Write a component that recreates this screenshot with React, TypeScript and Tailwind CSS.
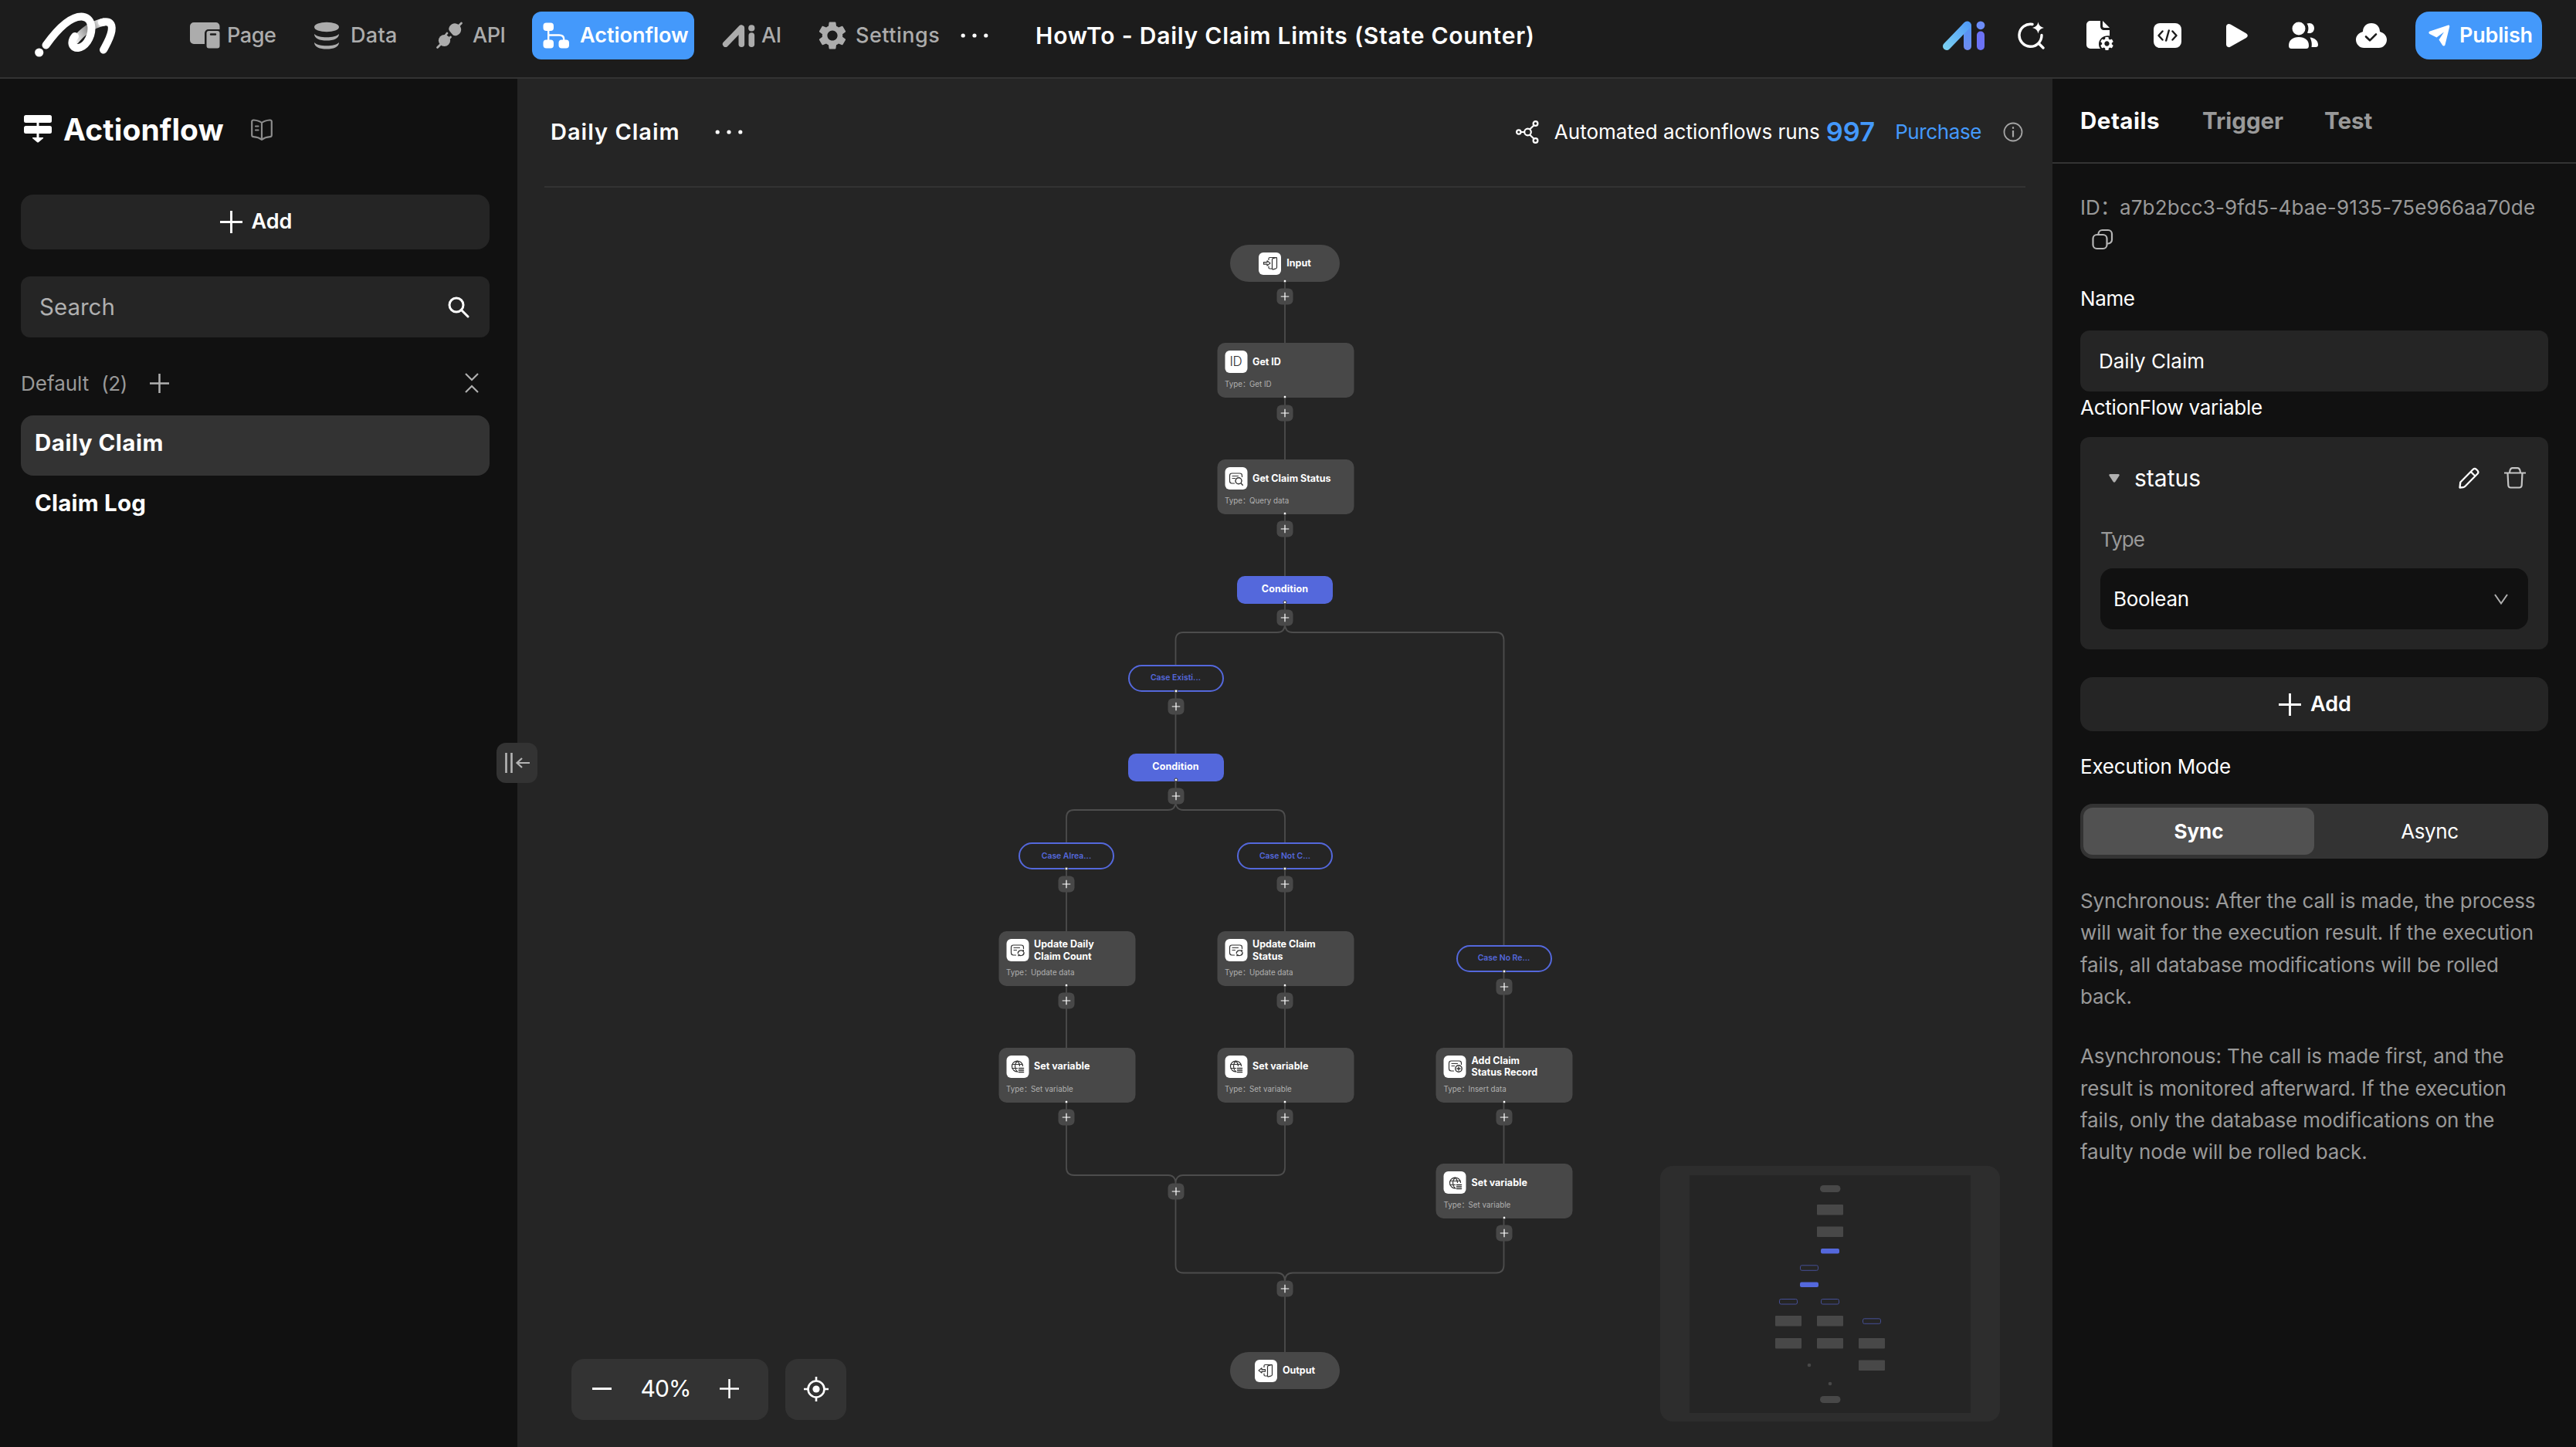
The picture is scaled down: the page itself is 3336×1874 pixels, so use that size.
import type { ReactNode } from "react";
import { MdSettings } from "react-icons/md";

/* ---------- icons ---------- */

function Logo() {
  return (
    <svg viewBox="44 16 108 62" className="h-[62px] w-[108px]" fill="none" strokeWidth="10" strokeLinecap="round">
      <defs>
        <linearGradient id="fold" x1="96" y1="56" x2="144" y2="28" gradientUnits="userSpaceOnUse">
          <stop offset="0" stopColor="#ffffff" />
          <stop offset="0.42" stopColor="#8f8f8f" />
          <stop offset="0.55" stopColor="#8f8f8f" />
          <stop offset="0.8" stopColor="#ffffff" />
        </linearGradient>
      </defs>
      <path d="M97 54C105 44 118 33 134 29.6" stroke="url(#fold)" />
      <path d="M59.5 59.5C75 38 92 21 107.5 22.7C121 24.5 121 43 113 55C106 65 95.5 65 93.7 58.5C92.8 55 94.5 51 97 48" stroke="#fff" />
      <path d="M132 30C142 27.5 146 32 144.5 41C143 50 138 58 134 65.5" stroke="#fff" />
      <circle cx="50.7" cy="69" r="5.6" fill="#fff" />
    </svg>
  );
}

function PageIcon() {
  return (
    <svg viewBox="0 0 39 34" className="h-[34px] w-[39px]" fill="currentColor">
      <path d="M5 0h28.500a5 5 0 0 1 5 5v4H24a5 5 0 0 0-5 5v14H5a5 5 0 0 1-5-5V5a5 5 0 0 1 5-5z" />
      <path fillRule="evenodd" d="M24.500 11h11a3 3 0 0 1 3 3v16.500a3 3 0 0 1-3 3h-11a3 3 0 0 1-3-3V14a3 3 0 0 1 3-3zm2.500 3.300a1 1 0 0 0 0 2.400h6a1 1 0 0 0 0-2.400z" />
    </svg>
  );
}

function DataIcon() {
  return (
    <svg viewBox="0 0 34 36" className="h-9 w-[34px]" fill="currentColor">
      <ellipse cx="17" cy="7" rx="16" ry="6.200" />
      <path d="M1 16c0 6 7 8.500 16 8.500S33 22 33 16c-3 3-9 4.300-16 4.300S4 19 1 16z" />
      <path d="M1 27c0 6 7 8.500 16 8.500S33 33 33 27c-3 3-9 4.300-16 4.300S4 30 1 27z" />
    </svg>
  );
}

function ApiIcon() {
  return (
    <svg viewBox="0 0 36 36" className="size-9" fill="currentColor" stroke="currentColor" strokeLinecap="round">
      <circle cx="11.500" cy="24.500" r="7.600" stroke="none" />
      <path d="M2.500 33.500L8 28M11 20l4-5M15 24.500l4.500-4.500" strokeWidth="2.800" />
      <path d="M17.500 8a8 8 0 1 1 10 10c-3.500 1-5-.5-7-3s-4-4-3-7z" stroke="none" />
      <path d="M28 7.500L33.500 2" strokeWidth="2.800" />
    </svg>
  );
}

function FlowIcon() {
  return (
    <svg viewBox="0 0 35 34" className="h-[34px] w-[35px]" fill="currentColor">
      <rect x="0.500" y="0.500" width="13.500" height="10.500" rx="4" />
      <rect x="0.500" y="22.500" width="13.500" height="11" rx="4" />
      <rect x="20.500" y="22.500" width="13.500" height="11" rx="4" />
      <path d="M7.200 10v14M7.200 16.500H21c4 0 6.200 2 6.200 5V24" fill="none" stroke="currentColor" strokeWidth="2.400" />
    </svg>
  );
}

function AiIcon({ colored = false, className }: { colored?: boolean; className: string }) {
  return (
    <svg viewBox="0 0 56 38" className={className} fill="none" strokeLinecap="round" strokeWidth="10">
      <defs>
        <linearGradient id="aiSlant" x1="0" y1="38" x2="36" y2="0" gradientUnits="userSpaceOnUse">
          <stop stopColor="#7fd6f2" />
          <stop offset="1" stopColor="#4d97f6" />
        </linearGradient>
        <linearGradient id="aiStem" x1="34" y1="0" x2="34" y2="38" gradientUnits="userSpaceOnUse">
          <stop stopColor="#4d97f6" />
          <stop offset="1" stopColor="#6f8bf0" />
        </linearGradient>
      </defs>
      <rect x="28" y="1" width="10" height="37" rx="5" fill={colored ? "url(#aiStem)" : "currentColor"} />
      <path d="M6 33L32.500 5.500" stroke={colored ? "url(#aiSlant)" : "currentColor"} />
      <path d="M50 18.500V33" stroke={colored ? "#6c72f5" : "currentColor"} />
      <circle cx="50" cy="5.800" r="5.400" fill={colored ? "#6c8cf8" : "currentColor"} />
    </svg>
  );
}

function SparkSearchIcon() {
  return (
    <svg viewBox="0 0 36 36" className="size-9" fill="none" stroke="#fff" strokeWidth="3.400" strokeLinecap="round">
      <path d="M19 3.500a14.500 14.500 0 1 0 12 14M27 28l6 6" />
      <path d="M26.500.500c1 4.500 3 6.500 7.500 7.500-4.500 1-6.500 3-7.500 7.500-1-4.500-3-6.500-7.500-7.500 4.500-1 6.500-3 7.500-7.500z" fill="#fff" stroke="none" />
    </svg>
  );
}

function DocGearIcon() {
  return (
    <span className="relative h-[38px] w-9">
      <svg viewBox="0 0 36 38" className="h-[38px] w-9" fill="#fff">
        <path d="M6 0h13v7c0 3 2 5 5 5h7v7.500c-8-1-14 4-14 10.500 0 2.500.7 4.500 2 6H6a5 5 0 0 1-5-5V5a5 5 0 0 1 5-5z" />
        <path d="M22 0l9 9h-6.500A2.500 2.500 0 0 1 22 6.500z" />
      </svg>
      <MdSettings className="absolute -right-0.5 -bottom-0.5 size-[21px] text-white" />
    </span>
  );
}

function CodeIcon() {
  return (
    <svg viewBox="0 0 36 32" className="h-8 w-9" fill="none">
      <rect width="36" height="32" rx="8" fill="#fff" />
      <path d="M11.500 10.500L6.500 16l5 5.500M24.500 10.500l5 5.500-5 5.500M19.800 9.500l-3.600 13" stroke="#1c1c1c" strokeWidth="2.400" strokeLinecap="round" strokeLinejoin="round" />
    </svg>
  );
}

function PlayIcon() {
  return (
    <svg viewBox="0 0 30 32" className="ml-1 h-8 w-[30px]" fill="#fff">
      <path d="M1 4.500C1 1.500 4 0 6.500 1.500l20 11.500c3 1.700 3 4.500 0 6.200l-20 11.400C4 32 1 30.500 1 27.500z" />
    </svg>
  );
}

function PeopleIcon() {
  return (
    <svg viewBox="0 0 40 36" className="h-9 w-10" fill="#fff">
      <circle cx="14" cy="9" r="8.500" />
      <path d="M1 31c0-7 5-11 13-11s13 4 13 11c0 2.500-1 4-3.500 4h-19C2 35 1 33.500 1 31z" />
      <path d="M24.500 2.500c6-2 9.500 1.500 9.500 6s-4 8-9 6c2-3.500 2-8.500-.5-12zM28.500 20.500c6 .5 10.500 4 10.500 9.500 0 2-1 3-3 3h-5.500c1-5-.5-9.500-2-12.500z" />
    </svg>
  );
}

function CloudIcon() {
  return (
    <svg viewBox="0 0 40 32" className="h-8 w-10" fill="#fff">
      <path d="M20 0c6.500 0 11 4.500 11 11 5 1.500 9 5 9 10.500S35.500 32 29.500 32h-19C4.500 32 0 27 0 21.500S4 12.500 9 11C9 4.500 13.500 0 20 0z" />
      <path d="M13 17.500l5 4.800 8-8" fill="none" stroke="#1c1c1c" strokeWidth="2.600" strokeLinecap="round" strokeLinejoin="round" />
    </svg>
  );
}

function SendIcon() {
  return (
    <svg viewBox="0 0 28 28" className="size-7" fill="#fff">
      <path d="M25 .7c1.500-.5 2.600.5 2.200 2L21.500 26c-.5 1.800-2.500 2-3.500.5l-4.500-7L20 9.500l-9.500 7L1.500 12c-1.600-.9-1.500-3 .3-3.600z" />
    </svg>
  );
}

function BranchTitleIcon() {
  return (
    <svg viewBox="0 0 36 36" className="size-9" fill="#fff">
      <rect y="0" width="36" height="10" rx="2.500" />
      <rect y="14" width="36" height="10" rx="2.500" />
      <path d="M16.500 9h3v20h4.800c.8 0 1 .6.6 1.200l-6 5c-.5.5-1.200.5-1.700 0l-6-5c-.5-.5-.2-1.200.5-1.200h4.800z" />
    </svg>
  );
}

function BookIcon() {
  return (
    <svg viewBox="0 0 28 28" className="size-7" fill="none" stroke="#8c8c8c" strokeWidth="2.200" strokeLinejoin="round" strokeLinecap="round">
      <path d="M14 5C11.500 3 8 1.800 3.500 1.500 2 1.400 1.200 2.200 1.200 3.500v17.500c0 1.300.8 2 2 2.100 4 .3 7.800 1.400 10.800 3.700 3-2.300 6.800-3.400 10.800-3.700 1.200-.1 2-.8 2-2.100V3.500c0-1.300-.8-2.100-2.300-2C20 1.800 16.500 3 14 5zM14 5v21.500M6 9.500h3.500M6 14.500h3.500" />
    </svg>
  );
}

function Dots({ className }: { className: string }) {
  return (
    <svg viewBox="0 0 36 6" className={className} fill="#fff">
      <circle cx="3.200" cy="3" r="2.600" />
      <circle cx="18" cy="3" r="2.600" />
      <circle cx="32.800" cy="3" r="2.600" />
    </svg>
  );
}

function Plus({ className, width = 3 }: { className: string; width?: number }) {
  return (
    <svg viewBox="0 0 30 30" className={className} fill="none" stroke="currentColor" strokeWidth={width}>
      <path d="M15 0v30M0 15h30" />
    </svg>
  );
}

function NodesIcon() {
  return (
    <svg viewBox="0 0 30 30" className="size-[30px]" fill="none" stroke="#fff" strokeWidth="2.200">
      <circle cx="3.800" cy="15" r="2.700" />
      <circle cx="15.500" cy="15" r="4.300" />
      <circle cx="25.500" cy="4" r="2.900" />
      <circle cx="25.500" cy="26" r="2.900" />
      <path d="M6.500 15h4.700M18 11.500l5.500-5.200M18 18.500l5.500 5.200" />
    </svg>
  );
}

/* ---------- header ---------- */

function NavItem({ icon, label, className }: { icon: ReactNode; label: string; className: string }) {
  return (
    <div className={`flex items-center ${className}`}>
      <span className="flex w-[50px] shrink-0 items-center pl-0.5">{icon}</span>
      <span>{label}</span>
    </div>
  );
}

function Header() {
  return (
    <header className="h-[102px] border-b-2 border-[#333] bg-[#1c1c1c] pt-[15px]">
      <div className="flex h-[62px] items-center">
        <div className="w-[244px] pl-11">
          <Logo />
        </div>
        <nav className="flex h-full items-center text-[27px] font-medium text-[#acacac]">
          <NavItem className="w-[160px] tracking-[-0.4px]" icon={<PageIcon />} label="Page" />
          <NavItem className="w-[158px] tracking-[0.3px]" icon={<DataIcon />} label="Data" />
          <NavItem className="w-[127px] tracking-[-0.5px]" icon={<ApiIcon />} label="API" />
          <NavItem
            className="mr-[34px] h-full w-[210px] rounded-xl bg-[#4499fb] pl-3 font-semibold text-white"
            icon={<FlowIcon />}
            label="Actionflow"
          />
          <NavItem className="w-[125px] gap-[3px] tracking-[-0.5px]" icon={<AiIcon className="h-[29px] w-[43px]" />} label="AI" />
          <NavItem className="w-[186px] tracking-[0.500px]" icon={<MdSettings className="-ml-1 size-11 shrink-0" />} label="Settings" />
        </nav>
        <Dots className="h-1.5 w-9" />
        <h1 className="ml-[61px] text-[30px] font-semibold tracking-[0.76px] whitespace-nowrap">
          HowTo - Daily Claim Limits (State Counter)
        </h1>
        <div className="ml-auto flex items-center">
          {[
            <AiIcon key="ai" colored className="h-[38px] w-14" />,
            <SparkSearchIcon key="search" />,
            <DocGearIcon key="doc" />,
            <CodeIcon key="code" />,
            <PlayIcon key="play" />,
            <PeopleIcon key="people" />,
            <CloudIcon key="cloud" />,
          ].map((icon, i) => (
            <span key={i} className="flex w-[88px] justify-center">{icon}</span>
          ))}
          <button className="mr-11 ml-[13px] flex h-[62px] w-[164px] items-center gap-3 rounded-[18px] bg-[#4499fb] pl-[17px] text-[27px] font-semibold tracking-[-0.2px]">
            <SendIcon />
            Publish
          </button>
        </div>
      </div>
    </header>
  );
}

/* ---------- left sidebar ---------- */

function AddButton({ className }: { className: string }) {
  return (
    <button className={`flex items-center justify-center gap-3 rounded-2xl bg-[#252525] pl-0.5 text-[27px] font-semibold ${className}`}>
      <Plus className="size-[29px]" />
      Add
    </button>
  );
}

function Sidebar() {
  return (
    <aside className="relative w-[670px] shrink-0 bg-[#111] px-[27px] pt-[41px]">
      <div className="flex h-12 items-center">
        <span className="w-[55px] pl-1"><BranchTitleIcon /></span>
        <h2 className="pt-0.5 text-[39px] font-bold tracking-[0.1px]">Actionflow</h2>
        <span className="ml-[35px] pt-0.5"><BookIcon /></span>
      </div>
      <AddButton className="mt-[61px] h-[71px] w-[607px]" />
      <div className="mt-[35px] flex h-[79px] w-[607px] items-center justify-between rounded-xl bg-[#252525] pr-[26px] pl-6">
        <span className="text-[29.5px] text-[#b0b0b0]">Search</span>
        <svg viewBox="0 0 28 28" className="size-7" fill="none" stroke="#fff" strokeWidth="3" strokeLinecap="round">
          <circle cx="11" cy="11" r="9" />
          <path d="M17.500 17.500l8.500 8.500" />
        </svg>
      </div>
      <div className="mt-[39px] flex h-10 w-[607px] items-center text-[26px] text-[#999]">
        <span>Default</span>
        <span className="ml-[16px] tracking-[-0.5px]">(2)</span>
        <Plus className="ml-[29px] size-[25px] text-[#b0b0b0]" width={3} />
        <svg viewBox="0 0 18 26" className="mr-[14px] ml-auto h-[26px] w-[18px]" fill="none" stroke="#b0b0b0" strokeWidth="2.200">
          <path d="M1 1l8 8 8-8M1 25l8-8 8 8" />
        </svg>
      </div>
      <ul className="mt-[22px] w-[607px] text-[29.5px] font-bold tracking-[0.5px]">
        <li className="flex h-[78px] items-center rounded-2xl bg-[#333] pb-[7px] pl-[18px]">Daily Claim</li>
        <li className="flex h-[78px] items-center pb-2 pl-[18px] tracking-[0.2px]">Claim Log</li>
      </ul>
      <button className="absolute top-[860px] left-[643px] z-10 flex h-[52px] w-[53px] items-center justify-center rounded-xl bg-[#333]">
        <svg viewBox="0 0 32 26" className="h-[26px] w-8" fill="none" stroke="#b5b5b5" strokeWidth="2.600">
          <path d="M1.500 0v26M8.500 0v26" />
          <path d="M32 13H16M22 7l-6.500 6 6.500 6" strokeWidth="2.200" />
        </svg>
      </button>
    </aside>
  );
}

/* ---------- flow canvas ---------- */

type IconName = "in" | "out" | "id" | "query" | "update" | "insert" | "variable";

function Glyph({ name }: { name: IconName }) {
  return (
    <span className="flex size-[29px] shrink-0 items-center justify-center rounded-[6px] bg-white">
      {name === "id" ? (
        <span className="text-[17px] leading-none font-light tracking-[-0.3px] text-[#333]">ID</span>
      ) : (
        <svg viewBox="0 0 20 20" className="size-5" fill="none" stroke="#333" strokeWidth="1.200" strokeLinejoin="round" strokeLinecap="round">
          {(name === "in" || name === "out") && (
            <>
              <path d="M8 5.500V4q0-1.500 1.500-1.500H18M8 14v1.500q0 1.500 1.500 1.500H12" />
              <path d="M12.500 5.200q0-1.200 1.200-1.500l3.500-1q1.300-.2 1.300 1v11.500q0 1.200-1.200 1.600l-3.500 1q-1.300.2-1.300-1z" />
              {name === "in" ? (
                <path d="M1.500 8.700H6V6.800l4 3.100-4 3.100v-1.800H1.500z" />
              ) : (
                <path d="M9.500 8.700H5V6.800L1 9.900l4 3.100v-1.800h4.500z" />
              )}
            </>
          )}
          {(name === "query" || name === "update" || name === "insert") && (
            <>
              <path d="M18 7.500V6q0-3-3-3H5Q2 3 2 6v7q0 3 3 3h3M5.500 6.500H13M5.500 9.500H9" />
              {name === "query" && <path d="M13.500 8.800a4 4 0 1 0 0 8 4 4 0 0 0 0-8zM16.500 15.800l2.300 2.400" strokeWidth="1.400" />}
              {name === "insert" && <path d="M14.500 8.800a4.200 4.200 0 1 0 0 8.400 4.200 4.200 0 0 0 0-8.400zM14.500 11v4M12.500 13h4" strokeWidth="1.400" />}
              {name === "update" && <path d="M10.800 13.500a4 3.600 0 0 1 7-2.300v-1.700M18.500 12.500a4 3.600 0 0 1-7 2.800v1.500" strokeWidth="1.300" />}
            </>
          )}
          {name === "variable" && (
            <>
              <path d="M10.500 17A7 7 0 1 1 17 9.500M3.200 7.500h13.300M3.200 12.500H10M10 3c-4 4-4 10 0 14M10 3c2 2 3 4 3 6.500" />
              <path d="M12 12.500h6M12 15h6M12 17.500h6" strokeWidth="1.600" />
            </>
          )}
        </svg>
      )}
    </span>
  );
}

// column centres on the canvas
const A = 711;
const B = 852.5;
const C = 994;
const D = 1277.5;

const cards: { x: number; y: number; icon: IconName; title: string[]; type: string }[] = [
  { x: C, y: 342, icon: "id", title: ["Get ID"], type: "Get ID" },
  { x: C, y: 493, icon: "query", title: ["Get Claim Status"], type: "Query data" },
  { x: A, y: 1104, icon: "update", title: ["Update Daily", "Claim Count"], type: "Update data" },
  { x: C, y: 1104, icon: "update", title: ["Update Claim", "Status"], type: "Update data" },
  { x: A, y: 1254.5, icon: "variable", title: ["Set variable"], type: "Set variable" },
  { x: C, y: 1254.5, icon: "variable", title: ["Set variable"], type: "Set variable" },
  { x: D, y: 1254.5, icon: "insert", title: ["Add Claim", "Status Record"], type: "Insert data" },
  { x: D, y: 1405, icon: "variable", title: ["Set variable"], type: "Set variable" },
];

const conditions = [
  { x: C, y: 643.5 },
  { x: B, y: 873.5 },
];

const cases = [
  { x: B, y: 758.5, label: "Case Existi..." },
  { x: A, y: 989, label: "Case Alrea..." },
  { x: C, y: 989, label: "Case Not C..." },
  { x: D, y: 1121.5, label: "Case No Re..." },
];

const pills: { y: number; icon: IconName; label: string }[] = [
  { y: 215, icon: "in", label: "Input" },
  { y: 1649, icon: "out", label: "Output" },
];

const adders = [
  [C, 282], [C, 432.5], [C, 583], [C, 698], [B, 813], [B, 928.5],
  [A, 1043], [C, 1043], [D, 1176], [A, 1194], [C, 1194],
  [A, 1344.5], [C, 1344.5], [D, 1344.5], [D, 1495], [B, 1440.5], [C, 1567],
];

const ports = [
  [C, 262], [C, 412], [C, 563], [C, 678], [B, 793], [B, 908], [A, 1023], [C, 1023], [D, 1156],
  [A, 1174], [C, 1174], [A, 1325], [C, 1325], [D, 1325], [D, 1475],
];

const edges = [
  "M994 262V342M994 412V493M994 563V644M994 678V708",
  "M994 706q0 11-10 11H862.5q-10 0-10 10V759M994 706q0 11 10 11H1267.5q10 0 10 10V1122",
  "M852.5 793V874M852.5 908V937",
  "M852.5 936q0 11-10 11H721q-10 0-10 10V989M852.5 936q0 11 10 11H984q10 0 10 10V989",
  "M711 1023V1104M994 1023V1104M711 1174V1255M994 1174V1255",
  "M711 1325V1410q0 10 10 10H842.5q10 0 10 11M994 1325V1410q0 10-10 10H862.5q-10 0-10 11",
  "M1277.5 1156V1255M1277.5 1325V1405M1277.5 1475V1536.5q0 10-10 10H1004q-10 0-10 11",
  "M852.5 1431V1536.5q0 10 10 10H984q10 0 10 11V1650",
];

function Canvas() {
  return (
    <div className="absolute inset-0">
      <svg viewBox="0 0 1988 1772" className="absolute inset-0 h-[1772px] w-[1988px]" fill="none" stroke="#4d4d4d" strokeWidth="1.800">
        {edges.map((d) => <path key={d} d={d} />)}
      </svg>

      {pills.map((p) => (
        <div
          key={p.label}
          className="absolute flex h-12 w-[142px] -translate-x-1/2 items-center justify-center gap-[7px] rounded-full bg-[#484848] text-[12.5px] font-bold"
          style={{ left: C, top: p.y }}
        >
          <Glyph name={p.icon} />
          {p.label}
        </div>
      ))}

      {cards.map((c) => (
        <div
          key={`${c.x}-${c.y}`}
          className="absolute flex h-[71px] w-[177px] -translate-x-1/2 flex-col rounded-[10px] bg-[#484848] px-[10px] pt-[10px]"
          style={{ left: c.x + 0.5, top: c.y }}
        >
          <div className="flex h-[29px] items-center gap-[7px] text-[12.5px] leading-[15.5px] font-bold whitespace-nowrap">
            <Glyph name={c.icon} />
            <div>{c.title.map((t) => <div key={t}>{t}</div>)}</div>
          </div>
          <div className="mt-[7px] flex text-[9.8px] leading-[15px] text-[#b0b0b0]">
            <span className="w-[32px] whitespace-nowrap">Type：</span>
            <span>{c.type}</span>
          </div>
        </div>
      ))}

      {conditions.map((c) => (
        <div
          key={c.y}
          className="absolute flex h-[36px] w-[124px] -translate-x-1/2 items-center justify-center rounded-[10px] bg-[#5468dc] text-[12.5px] font-bold tracking-[0.1px]"
          style={{ left: c.x, top: c.y }}
        >
          Condition
        </div>
      ))}

      {cases.map((c) => (
        <div
          key={c.label}
          className="absolute flex h-[35px] w-[124px] -translate-x-1/2 items-center justify-center rounded-full border-2 border-[#5468dc] text-[10.4px] font-semibold text-[#5468dc]"
          style={{ left: c.x, top: c.y }}
        >
          {c.label}
        </div>
      ))}

      {adders.map(([x, y]) => (
        <span
          key={`${x}-${y}`}
          className="absolute flex size-[21px] -translate-1/2 items-center justify-center rounded-[6px] bg-[#484848]"
          style={{ left: x, top: y }}
        >
          <Plus className="size-[11px]" width={3.4} />
        </span>
      ))}

      {ports.map(([x, y]) => (
        <span
          key={`${x}-${y}`}
          className="absolute size-[5px] -translate-1/2 rounded-full border border-[#333] bg-white"
          style={{ left: x, top: y }}
        />
      ))}
    </div>
  );
}

function Minimap() {
  return (
    <div className="absolute right-[68px] bottom-[33px] h-[331px] w-[440px] rounded-2xl bg-[#2d2d2d] px-[38px] pt-3">
      <svg viewBox="0 0 364 308" className="h-[308px] w-[364px] bg-[#252525]" fill="none">
        <g fill="#484848">
          <rect x="169" y="13" width="26.500" height="9" rx="4.500" />
          <rect x="169" y="286" width="26.500" height="9" rx="4.500" />
          <circle cx="155" cy="246" r="2.300" />
          <circle cx="182" cy="270" r="2.300" />
          {[[165, 38], [165, 66.5], [111, 182], [165, 182], [111, 211], [165, 211], [219, 211], [219, 239.5]].map(([x, y]) => (
            <rect key={`${x}-${y}`} x={x} y={y} width="34" height="13.500" rx="1" />
          ))}
        </g>
        <g fill="#5468dc">
          <rect x="170" y="95" width="24" height="6.500" rx="2" />
          <rect x="143" y="138.500" width="24" height="6.500" rx="2" />
        </g>
        <g stroke="#454f96">
          {[[143.5, 116.8], [116.5, 160.5], [170.5, 160.5], [224.5, 185.8]].map(([x, y]) => (
            <rect key={x} x={x} y={y} width="23" height="6.500" rx="2" />
          ))}
        </g>
      </svg>
    </div>
  );
}

function Workspace() {
  return (
    <main className="relative flex-1 bg-[#252525]">
      <Canvas />
      <div className="mx-[35px] flex h-[141px] items-center border-b-2 border-[#333] pb-0.5">
        <h2 className="w-[221px] pl-2 text-[29px] font-semibold tracking-[1px]">Daily Claim</h2>
        <Dots className="h-1.5 w-9" />
        <div className="ml-auto flex items-center text-[26px]">
          <NodesIcon />
          <span className="ml-5">Automated actionflows runs</span>
          <span className="ml-2 text-[34.5px] font-semibold text-[#4499fb]">997</span>
          <span className="ml-[26px] tracking-[-0.4px] text-[#4499fb]">Purchase</span>
          <svg viewBox="0 0 26 26" className="mr-[3px] ml-7 size-[26px]" fill="none" stroke="#a5a5a5" strokeWidth="1.800">
            <circle cx="13" cy="13" r="11.500" />
            <path d="M13 11v8.500M13 6.300v2.500" strokeWidth="2.200" />
          </svg>
        </div>
      </div>

      <div className="absolute bottom-[35px] left-[70px] flex gap-[22px]">
        <div className="flex h-[79px] w-[255px] items-center rounded-2xl bg-[#333] pb-0.5 pl-[27px]">
          <span className="h-[3px] w-[25px] bg-white" />
          <span className="w-[140px] text-center text-[30px] tracking-[-1px]">40%</span>
          <Plus className="size-[25px]" />
        </div>
        <div className="flex size-[79px] items-center justify-center rounded-2xl bg-[#333] pb-0.5">
          <svg viewBox="0 0 32 32" className="size-8" fill="none" stroke="#fff" strokeWidth="2.600">
            <circle cx="16" cy="16" r="10.500" />
            <circle cx="16" cy="16" r="4.600" fill="#fff" stroke="none" />
            <path d="M16 0v6M16 26v6M0 16h6M26 16h6" />
          </svg>
        </div>
      </div>

      <Minimap />
    </main>
  );
}

/* ---------- details panel ---------- */

function DetailsPanel() {
  return (
    <aside className="w-[678px] shrink-0 bg-[#111]">
      <div className="flex h-[110px] items-center border-b-2 border-[#333] pl-9 text-[29.5px] font-bold text-[#999]">
        <span className="w-[158px] tracking-[0.5px] text-white">Details</span>
        <span className="w-[158px]">Trigger</span>
        <span>Test</span>
      </div>

      <div className="px-9 pt-9 text-[26px]">
        <div className="h-[83px] leading-[41.4px] text-[#999]">
          <div className="flex">
            <span className="w-[51px] whitespace-nowrap">ID：</span>
            <span className="tracking-[0.15px]">a7b2bcc3-9fd5-4bae-9135-75e966aa70de</span>
          </div>
          <svg viewBox="0 0 28 28" className="mt-[7px] ml-[15px] size-7" fill="none" stroke="#b5b5b5" strokeWidth="2.200">
            <rect x="1.500" y="8" width="18" height="18" rx="5" />
            <path d="M8.500 8V7a5 5 0 0 1 5-5H21a5 5 0 0 1 5 5v7.500a5 5 0 0 1-5 5h-1.500" />
          </svg>
        </div>

        <div className="mt-[35px] leading-[41px] tracking-[-0.4px]">Name</div>
        <div className="mt-[21px] flex h-[79px] items-center rounded-xl bg-[#252525] px-6">Daily Claim</div>
        <div className="leading-[41px] tracking-[-0.3px]">ActionFlow variable</div>

        <div className="mt-[18px] h-[275px] rounded-xl bg-[#252525] px-[26px] pt-[33px]">
          <div className="flex h-10 items-center">
            <svg viewBox="0 0 14 11" className="ml-[11px] h-[11px] w-[14px]" fill="#b0b0b0">
              <path d="M1.500 0h11q1.800.3 1 2L8.300 10q-1.300 1.500-2.600 0L.5 2Q-.3.300 1.500 0z" />
            </svg>
            <span className="ml-[19px] text-[30px]">status</span>
            <svg viewBox="0 0 28 28" className="ml-auto size-7" fill="none" stroke="#fff" strokeWidth="2.300" strokeLinejoin="round">
              <path d="M1.500 26.500l.8-7L18.800 2.800q2-1.800 4 0l1.700 1.700q1.800 2 0 4L8 25.200q-1 .8-2 .9zM15.800 6l5.800 5.800" />
            </svg>
            <svg viewBox="0 0 28 28" className="mr-[3px] ml-[31px] size-7" fill="none" stroke="#c4c4c4" strokeWidth="2.200" strokeLinejoin="round">
              <path d="M0 7.500h28M4.500 7.500l.8 16q.3 3 3 3h11.400q2.700 0 3-3l.8-16M7 7.500q.3-6 3.500-6.300h7q3.200.3 3.500 6.300" />
            </svg>
          </div>
          <div className="mt-10 h-10 leading-10 tracking-[-1px] text-[#999]">Type</div>
          <div className="mt-[17px] flex h-[79px] items-center justify-between rounded-2xl bg-[#111] pr-[26px] pl-[17px] tracking-[-0.3px]">
            Boolean
            <svg viewBox="0 0 18 14" className="h-[14px] w-[18px]" fill="none" stroke="#b0b0b0" strokeWidth="2">
              <path d="M1 1l8 11.500L17 1" />
            </svg>
          </div>
        </div>

        <AddButton className="mt-9 h-[70px] w-full" />

        <div className="mt-[26px] leading-10 tracking-[-0.2px]">Execution Mode</div>
        <div className="mt-7 flex h-[71px] items-center rounded-2xl bg-[#333] px-1">
          <span className="flex h-[61px] w-[299px] items-center justify-center rounded-xl bg-[#515151] font-bold">Sync</span>
          <span className="flex-1 text-center tracking-[-0.4px]">Async</span>
        </div>

        <div className="mt-[34px] flex flex-col gap-[35.5px] leading-[41.4px] tracking-[-0.12px] text-[#999]">
          <p>
            Synchronous: After the call is made, the process will wait for the execution result. If the execution fails, all
            database modifications will be rolled back.
          </p>
          <p>
            Asynchronous: The call is made first, and the result is monitored afterward. If the execution fails, only the
            database modifications on the faulty node will be rolled back.
          </p>
        </div>
      </div>
    </aside>
  );
}

export default function App() {
  return (
    <div className="flex h-[1874px] w-[3336px] flex-col overflow-hidden bg-[#111] font-['Inter','Noto_Sans_CJK_SC',sans-serif] text-white">
      <Header />
      <div className="flex flex-1">
        <Sidebar />
        <Workspace />
        <DetailsPanel />
      </div>
    </div>
  );
}
